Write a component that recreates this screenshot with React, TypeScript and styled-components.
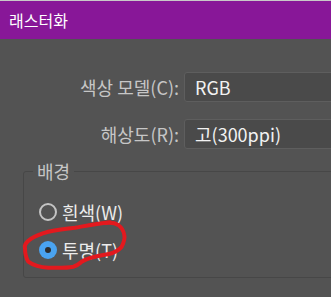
import { FunctionComponent } from 'react'
import { createGlobalStyle, styled } from 'styled-components'

const GlobalStyle = createGlobalStyle`
  html, body {
    margin: 0;
    padding: 0;
    background-color: #535353;
    font-family: 'Noto Sans CJK KR', 'Noto Sans', sans-serif;
    overflow: hidden;
  }
`

type Field = { label: string; value: string }

const fields: Field[] = [
  { label: '색상 모델(C):', value: 'RGB' },
  { label: '해상도(R):', value: '고(300ppi)' }
]

const App: FunctionComponent = () => {
  return (
    <Window>
      <GlobalStyle />
      <TitleBar>래스터화</TitleBar>
      <Form>
        {fields.map((field) => (
          <Row key={field.label}>
            <Label>{field.label}</Label>
            <Combo>{field.value}</Combo>
          </Row>
        ))}
      </Form>
      <Group>
        <Legend>배경</Legend>
        <RadioRow>
          <Radio checked={false} />
          <RadioLabel>흰색(W)</RadioLabel>
        </RadioRow>
        <RadioRow>
          <Radio checked={true} />
          <RadioLabel>투명(T)</RadioLabel>
        </RadioRow>
      </Group>
      <Scribble width='331' height='297' viewBox='0 0 331 297'>
        <path
          d='M110 222.3 C95 224 85 226 75 227.7 C62 229 55 230 48.3 231.7 C40 234 35 236 31.7 238.3 C26 242 24 245 25 248.3 C25 254 26 258 28.3 261.7 C34 266 41 267.5 48.3 267.7 C58 268 67 268 73.3 266.7 C78 265.5 80 263 81.7 261.7 C86 259 90 258 95 256.7 C102 255 107 254.5 111.7 253.3 C117 251 120 249 121.7 246.7 C124 242 125 238 124.3 235 C123.5 230 121 227 118.3 225 C115 223 112 222.5 106 223'
          fill='none'
          stroke='#e3191e'
          strokeWidth='4'
          strokeLinecap='round'
          strokeLinejoin='round'
        />
      </Scribble>
    </Window>
  )
}
export default App

const Window = styled.div`
  position: relative;
  width: 331px;
  height: 297px;
  overflow: hidden;
  background-color: #535353;
`

const TitleBar = styled.div`
  height: 38px;
  border-top: 1px solid #c8c8c8;
  background-color: #881798;
  color: #ffffff;
  font-size: 16px;
  display: flex;
  align-items: center;
  padding-left: 9px;
`

const Form = styled.div`
  display: flex;
  flex-direction: column;
  gap: 17px;
  padding-top: 33px;
`

const Row = styled.div`
  display: grid;
  grid-template-columns: 184px 220px;
  align-items: center;
`

const Label = styled.div`
  text-align: right;
  padding-right: 5px;
  color: #c6c6c6;
  font-size: 18px;
  white-space: nowrap;
`

const Combo = styled.div`
  height: 28px;
  border: 1px solid #5e5e5e;
  border-radius: 3px;
  background-color: #4a4a4a;
  color: #f2f2f2;
  font-size: 18px;
  display: flex;
  align-items: center;
  padding-left: 10px;
`

const Group = styled.fieldset`
  margin: 9px 0 0 23px;
  width: 360px;
  height: 120px;
  border: 1px solid #474747;
  border-radius: 3px;
  padding: 19px 0 0 0;
  box-sizing: border-box;
  display: flex;
  flex-direction: column;
  gap: 20px;
`

const Legend = styled.legend`
  color: #c6c6c6;
  font-size: 18px;
  padding: 0 4px;
  margin-left: 9px;
`

const RadioRow = styled.div`
  display: flex;
  align-items: center;
  gap: 5px;
  height: 18px;
  padding-left: 15px;
`

const Radio = styled.span<{ checked: boolean }>`
  width: 18px;
  height: 18px;
  box-sizing: border-box;
  border-radius: 50%;
  border: ${(props) => (props.checked ? 'none' : '2px solid #c4c4c4')};
  background-color: ${(props) => (props.checked ? '#4aa3f0' : 'transparent')};
  display: flex;
  align-items: center;
  justify-content: center;

  &::after {
    content: '';
    width: 6px;
    height: 6px;
    border-radius: 50%;
    background-color: #2d2d2d;
    display: ${(props) => (props.checked ? 'block' : 'none')};
  }
`

const RadioLabel = styled.span`
  color: #ececec;
  font-size: 18px;
`

const Scribble = styled.svg`
  position: absolute;
  left: 0;
  top: 0;
  pointer-events: none;
`
